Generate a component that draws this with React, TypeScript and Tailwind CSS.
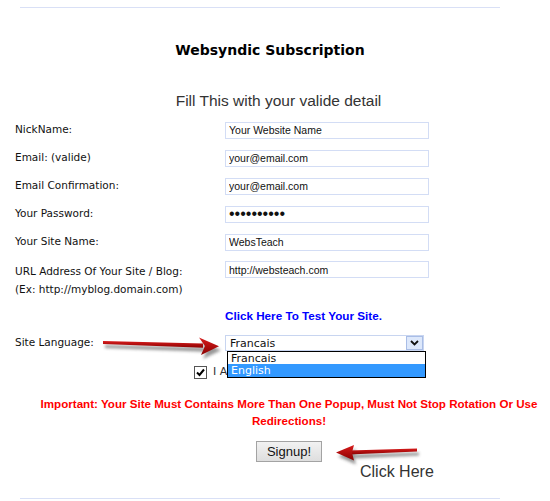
import React from 'react';

const labelFont = "font-['DejaVu_Sans',sans-serif]";
const arialFont = "font-['Liberation_Sans',Arial,sans-serif]";

interface FieldRowProps {
  label: string;
  value: string;
  dots?: boolean;
}

function FieldRow({ label, value, dots = false }: FieldRowProps) {
  return (
    <div className="flex h-[28px] items-center">
      <div className={`w-[225px] pl-[15px] text-[10.5px] text-[#111] ${labelFont}`}>{label}</div>
      <input
        readOnly
        value={value}
        className={`h-[17px] w-[204px] border border-[#d3ddf5] bg-white px-[3px] text-[#111] outline-none ${arialFont} ${
          dots ? 'text-[16px] leading-none' : 'text-[10.5px]'
        }`}
      />
    </div>
  );
}

// red pointer arrow with a soft drop shadow, head on the right
function ArrowRight() {
  const shaft = '3,7 103,9.6 103,13.8 3,10';
  const head = '99,3.5 119,12.2 101,21 105,12';
  return (
    <svg className="absolute left-[100px] top-[334px]" width="126" height="30" viewBox="0 0 126 30">
      <defs>
        <filter id="shadowR" x="-10%" y="-50%" width="120%" height="200%">
          <feGaussianBlur stdDeviation="1.6" />
        </filter>
        <linearGradient id="redR" x1="0" y1="0" x2="0" y2="1">
          <stop offset="0" stopColor="#d81c1c" />
          <stop offset="1" stopColor="#8a0000" />
        </linearGradient>
      </defs>
      <g transform="translate(2 4)" opacity="0.5" filter="url(#shadowR)">
        <polygon points={shaft} fill="#333" />
        <polygon points={head} fill="#333" />
      </g>
      <polygon points={shaft} fill="url(#redR)" />
      <polygon points={head} fill="url(#redR)" />
    </svg>
  );
}

// same arrow, pointing left at the button
function ArrowLeft() {
  const shaft = '18,10.6 86,8.4 86,11.4 18,14.6';
  const head = '5,12.5 23,5 21,12.5 23,20.5';
  return (
    <svg className="absolute left-[331px] top-[440px]" width="96" height="30" viewBox="0 0 96 30">
      <defs>
        <filter id="shadowL" x="-10%" y="-50%" width="120%" height="200%">
          <feGaussianBlur stdDeviation="1.6" />
        </filter>
        <linearGradient id="redL" x1="0" y1="0" x2="0" y2="1">
          <stop offset="0" stopColor="#d81c1c" />
          <stop offset="1" stopColor="#8a0000" />
        </linearGradient>
      </defs>
      <g transform="translate(2 4)" opacity="0.5" filter="url(#shadowL)">
        <polygon points={shaft} fill="#333" />
        <polygon points={head} fill="#333" />
      </g>
      <polygon points={shaft} fill="url(#redL)" />
      <polygon points={head} fill="url(#redL)" />
    </svg>
  );
}

function LanguageSelect() {
  return (
    <div className={`relative h-[16px] w-[199px] border border-[#c8d5f0] bg-white ${labelFont}`}>
      <div className="flex h-full items-center pl-[4px] text-[11px] leading-none text-[#111]">Francais</div>
      <div className="absolute right-0 top-0 flex h-[14px] w-[17px] items-center justify-center border border-[#a9bde6] bg-[#dde8fb]">
        <svg width="9" height="6" viewBox="0 0 9 6">
          <path d="M1 1 L4.5 4.5 L8 1" fill="none" stroke="#111" strokeWidth="1.8" />
        </svg>
      </div>
      {/* open option list */}
      <div className="absolute left-[1px] top-[15px] z-10 h-[27px] w-[199px] border border-black bg-white text-[11px] leading-[13px]">
        <div className="h-[12px] pl-[3px] text-[#111]">Francais</div>
        <div className="h-[13px] bg-[#3399ff] pl-[3px] text-white">English</div>
      </div>
    </div>
  );
}

export default function App() {
  return (
    <div className="relative h-[501px] w-[550px] overflow-hidden bg-white">
      <div className="pt-[7px]">
        <div className="ml-[20px] h-px w-[480px] bg-[#d9e0f6]" />
      </div>

      <h1 className={`mt-[33px] w-[540px] text-center text-[14px] font-bold leading-[18px] text-black ${labelFont}`}>
        Websyndic Subscription
      </h1>

      <div className={`ml-[7px] mt-[32px] w-[543px] text-center text-[15.5px] leading-[20px] text-[#333] ${arialFont}`}>
        Fill This with your valide detail
      </div>

      <div className="mt-[5px]">
        <FieldRow label="NickName:" value="Your Website Name" />
        <FieldRow label="Email: (valide)" value="your@email.com" />
        <FieldRow label="Email Confirmation:" value="your@email.com" />
        <FieldRow label="Your Password:" value="••••••••••" dots />
        <FieldRow label="Your Site Name:" value="WebsTeach" />
        <div className="flex items-start">
          <div className={`w-[225px] pl-[15px] pt-[6px] text-[10.5px] leading-[18px] text-[#111] ${labelFont}`}>
            URL Address Of Your Site / Blog:
            <br />
            (Ex: http://myblog.domain.com)
          </div>
          <input
            readOnly
            value="http://websteach.com"
            className={`mt-[5px] h-[17px] w-[204px] border border-[#d3ddf5] bg-white px-[3px] text-[10.5px] text-[#111] outline-none ${arialFont}`}
          />
        </div>
      </div>

      <div className={`mt-[9px] pl-[225px] text-[11.7px] font-bold leading-[18px] text-[#0000ff] ${arialFont}`}>
        Click Here To Test Your Site.
      </div>

      <div className="mt-[10px] flex h-[16px] items-center">
        <div className={`w-[225px] pl-[15px] text-[10.5px] text-[#111] ${labelFont}`}>Site Language:</div>
        <LanguageSelect />
      </div>

      <div className={`mt-[15px] flex h-[13px] items-center pl-[194px] text-[11px] ${labelFont}`}>
        <svg width="13" height="13" viewBox="0 0 13 13">
          <rect x="0.5" y="0.5" width="12" height="12" fill="#fff" stroke="#555" />
          <path d="M3 6.5 L5.5 9 L10 3.5" fill="none" stroke="#000" strokeWidth="2" />
        </svg>
        <span className="ml-[6px] text-[#333]">I Accept the</span>
        <span className="ml-[4px] font-bold text-[#2a90d0]">Terms &amp; Conditions</span>
      </div>

      <p className={`ml-[28px] mt-[16px] w-[522px] text-center text-[11.6px] font-bold leading-[17px] text-[#ff0000] ${arialFont}`}>
        Important: Your Site Must Contains More Than One Popup, Must Not Stop Rotation Or Use
        <br />
        Redirections!
      </p>

      <div className="ml-[28px] mt-[12px] flex w-[522px] justify-center">
        <button
          type="button"
          className={`h-[21px] w-[66px] border border-[#a3a3a3] bg-gradient-to-b from-[#f2f2f2] to-[#dedede] text-[13px] leading-none text-[#111] ${arialFont}`}
        >
          Signup!
        </button>
      </div>

      <div className={`absolute left-[360px] top-[462px] text-[16px] leading-[20px] text-[#333] ${arialFont}`}>Click Here</div>

      <div className="mt-[36px] ml-[20px] h-px w-[480px] bg-[#d9e0f6]" />

      <ArrowRight />
      <ArrowLeft />
    </div>
  );
}
